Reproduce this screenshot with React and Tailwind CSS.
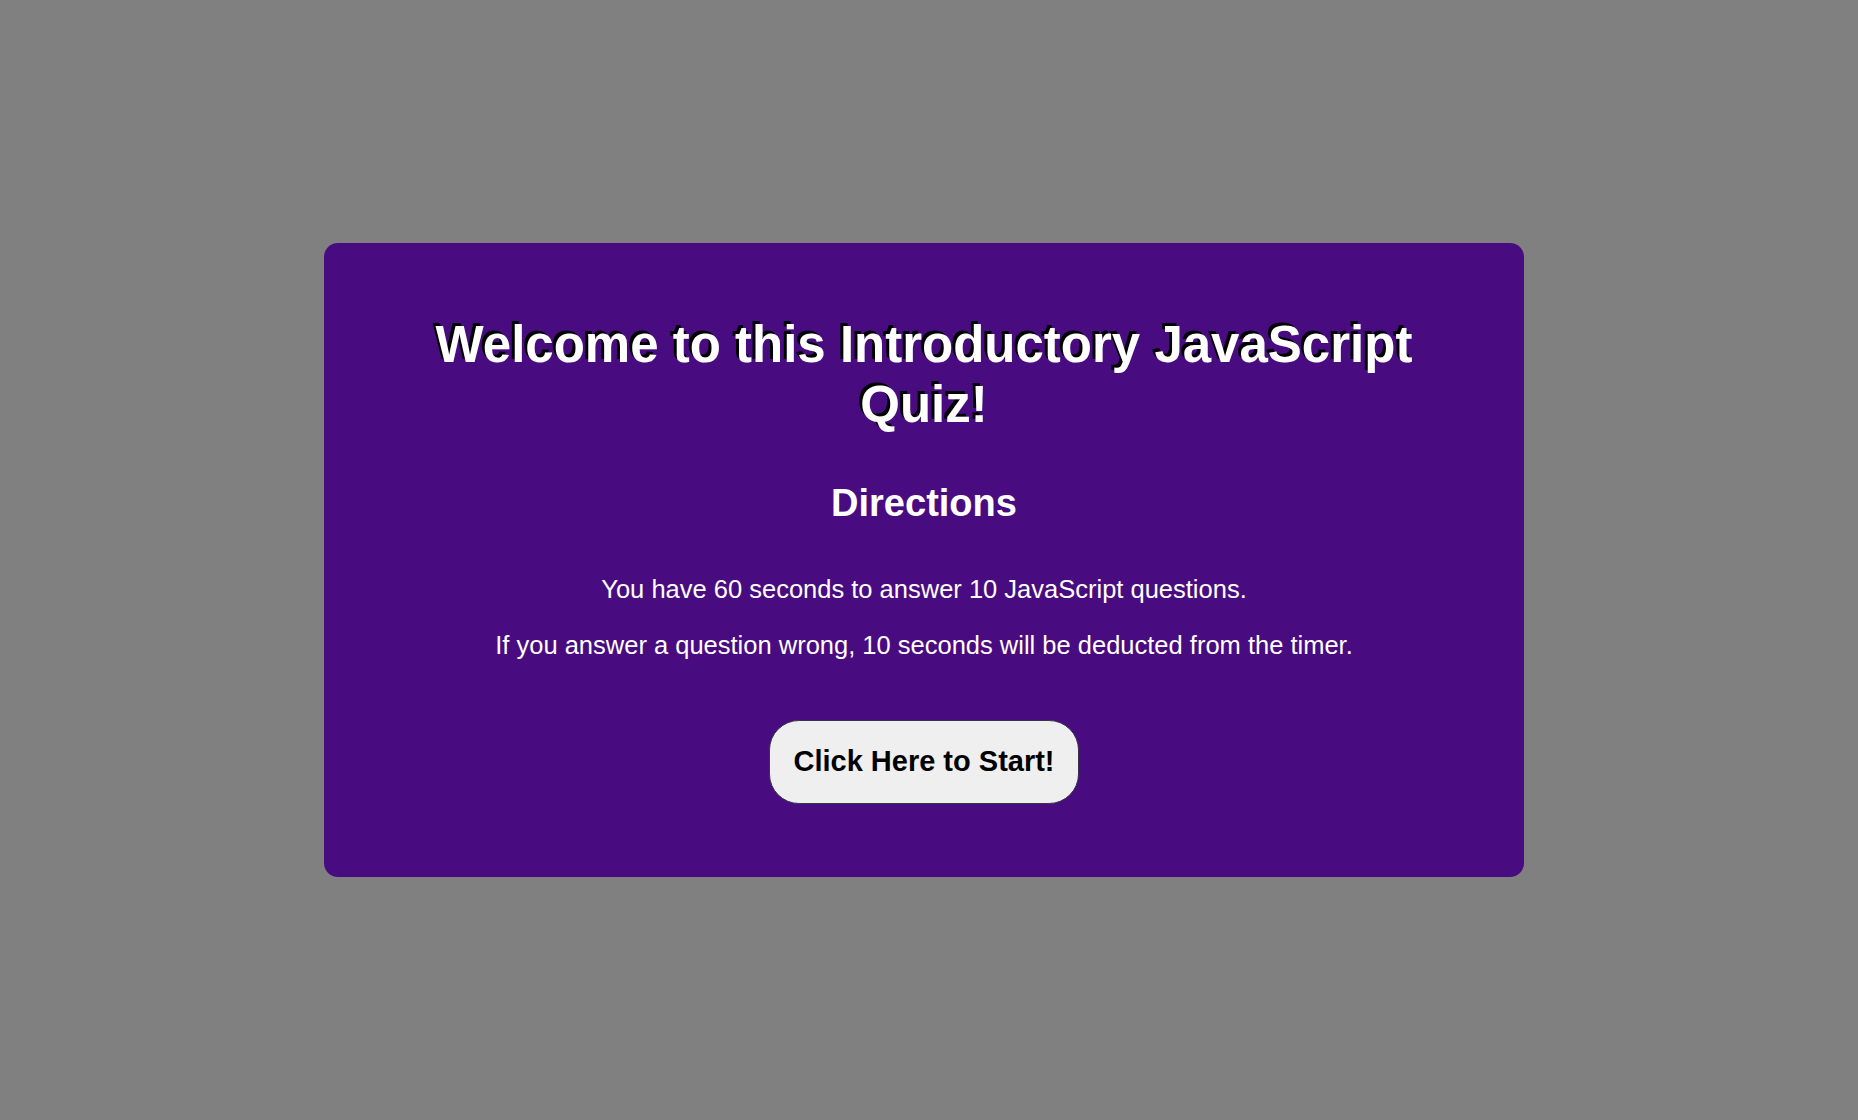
export default function App() {
  return (
    <div className="min-h-screen w-full bg-[#808080] flex items-center justify-center pr-[10px]" style={{ fontFamily: '"Liberation Sans", Arial, sans-serif' }}>
      <div className="w-[1200px] h-[634px] bg-[#490c80] rounded-[14px] flex flex-col items-center text-center text-white pt-[72px]">
        <h1 className="w-[1000px] text-[51px] leading-[60px] font-bold [text-shadow:-3px_-3px_0_#000]">
          Welcome to this Introductory JavaScript Quiz!
        </h1>
        <h2 className="mt-[46px] text-[38px] leading-[44px] font-bold">Directions</h2>
        <p className="mt-[50px] text-[25.5px] leading-[29px]">You have 60 seconds to answer 10 JavaScript questions.</p>
        <p className="mt-[27px] text-[25.5px] leading-[29px]">If you answer a question wrong, 10 seconds will be deducted from the timer.</p>
        <button className="mt-[60px] w-[310px] h-[84px] rounded-[30px] bg-[#efefef] border-[1.5px] border-[#3a3548] text-black text-[29px] font-bold">
          Click Here to Start!
        </button>
      </div>
    </div>
  )
}
